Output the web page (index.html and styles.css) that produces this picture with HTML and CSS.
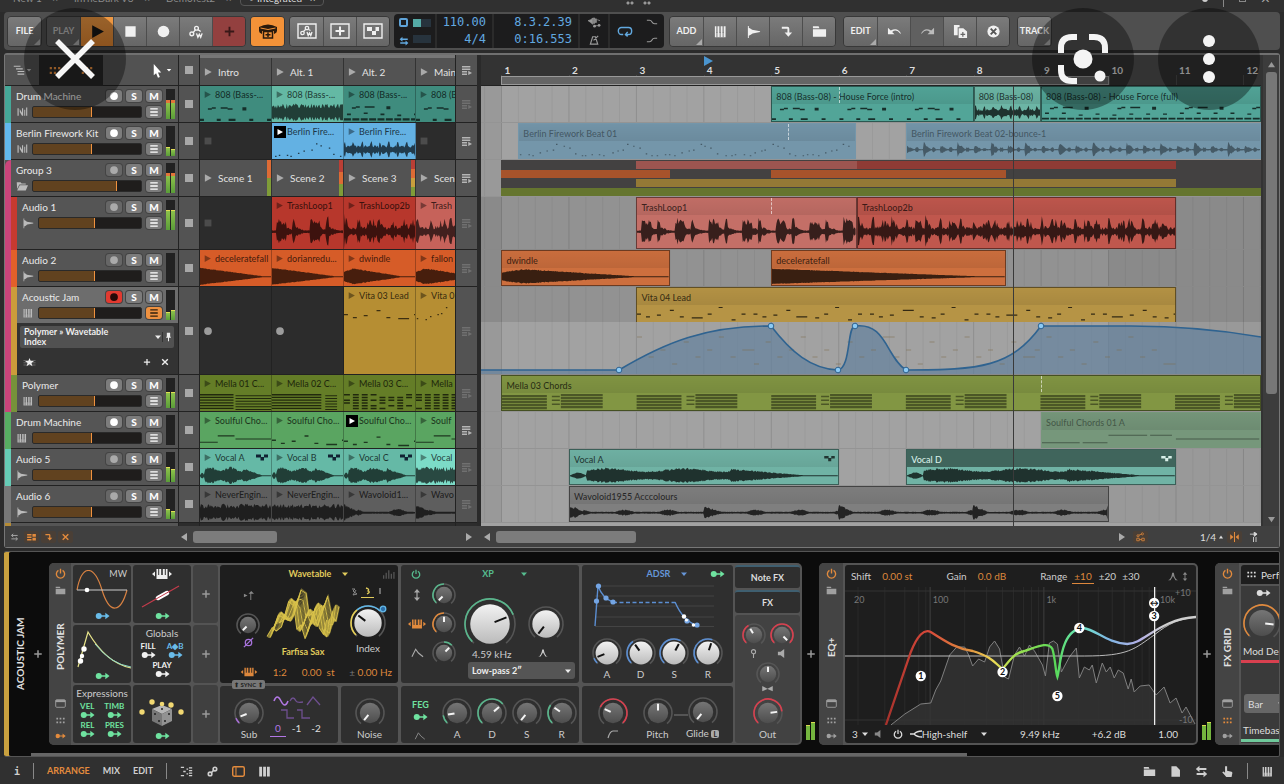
FILE: index.html
```html
<!DOCTYPE html>
<html lang="en">
<head>
<meta charset="utf-8">
<meta name="viewport" content="width=device-width, initial-scale=1">
<title>Integrated</title>
<link rel="stylesheet" href="styles.css">
</head>
<body>
<svg class="sprite" aria-hidden="true">
  <symbol id="play" viewBox="0 0 16 16"><path d="M3 2l11 6-11 6z"/></symbol>
  <symbol id="stop" viewBox="0 0 16 16"><path d="M2.500 2.500h11v11h-11z"/></symbol>
  <symbol id="rec" viewBox="0 0 16 16"><circle cx="8" cy="8" r="6.200"/></symbol>
  <symbol id="auto" viewBox="0 0 16 16"><g fill="none" stroke="currentColor" stroke-width="1.500"><circle cx="3" cy="10.500" r="2"/><circle cx="8" cy="4.500" r="2"/><path d="M4.500 9L7 6M9.500 6l3 2"/></g><path d="M8 10l1.500 4 1.500-3 1.500 3 1.500-4" fill="none" stroke="currentColor" stroke-width="1.500"/></symbol>
  <symbol id="plus" viewBox="0 0 16 16"><path d="M7 3h2v4h4v2H9v4H7V9H3V7h4z"/></symbol>
  <symbol id="cap" viewBox="0 0 20 16"><path d="M1 4q9-5 18 0v4q0 2-3 3V8H4v3Q1 10 1 8z"/><path d="M2.500 5q7.500 3 15 0" fill="none" stroke="#f39238"/><path d="M5.500 8.500h9v6.500h-9zM7.500 11.700h5M10 9.500v4.500" fill="none" stroke="currentColor" stroke-width="1.500"/></symbol>
  <symbol id="boxauto" viewBox="0 0 20 16"><path d="M1 1h18v14H1z" fill="none" stroke="currentColor" stroke-width="1.400"/><g fill="none" stroke="currentColor" stroke-width="1.300"><circle cx="5.500" cy="10" r="1.700"/><circle cx="10" cy="5" r="1.700"/><path d="M6.500 8.500l2.300-2.300M11.500 6.500l2 1M10 9l1.200 3.500 1.300-2.500 1.300 2.500L15 9"/></g></symbol>
  <symbol id="boxplus" viewBox="0 0 20 16"><path d="M1 1h18v14H1z" fill="none" stroke="currentColor" stroke-width="1.400"/><path d="M9 3.500h2V7h3.500v2H11v3.500H9V9H5.500V7H9z"/></symbol>
  <symbol id="boxstep" viewBox="0 0 20 16"><path d="M1 1h18v14H1z" fill="none" stroke="currentColor" stroke-width="1.400"/><path d="M4 4h5v4H4zM9 8h4v4H9zM12.500 4H16v4h-3.500z"/></symbol>
  <symbol id="steps" viewBox="0 0 12 8"><path d="M0 1h5v3H0zM4.500 3.500h3.500V7H4.500zM8 1h4v3H8z"/></symbol>
  <symbol id="piano" viewBox="0 0 16 16"><path d="M2 2.500h1.600v7h1.200v-7h2v7H8.200v-7h2v7h1.200v-7h2V14H2z"/><path d="M4.200 9v5M7.600 9v5M10.800 9v5" stroke="#555" stroke-width=".8"/></symbol>
  <symbol id="drum" viewBox="0 0 16 16"><path d="M2 3h1.600v10H2zM5 4l3 5V3h1.500v10H8l-3-5zM11 5h1.300v8H11zM13.500 2H15v11h-1.500z"/></symbol>
  <symbol id="wave" viewBox="0 0 16 16"><path d="M2 2h1v2l2 1 1.500 1.200L15 7.700v.8L7 10l-2 1.500-2 1V15H2z"/></symbol>
  <symbol id="turn" viewBox="0 0 16 16"><path d="M3 3h6q2 0 2 2v4h3l-4 4.500L6 9h3V5H3z"/></symbol>
  <symbol id="folder" viewBox="0 0 16 16"><path d="M1 2.500h6l1 2H1zM1 5.500h14v8H1z"/></symbol>
  <symbol id="openfolder" viewBox="0 0 16 16"><path d="M1 3h5l1.500 1.500H13V6H4.500L1.500 12zM5 7h11l-3 7H1.500z"/></symbol>
  <symbol id="undo" viewBox="0 0 16 16"><path d="M1 4v7h7L5.500 8.500Q10 5 14 10l1 .5Q11.500 3 4 7z"/></symbol>
  <symbol id="redo" viewBox="0 0 16 16"><path d="M15 4v7H8l2.500-2.500Q6 5 2 10l-1 .5Q4.500 3 12 7z"/></symbol>
  <symbol id="copy" viewBox="0 0 16 16"><path d="M1 1h6v2.500H5V12H1z"/><path d="M6 4.500h5L15 8v7H6z"/><path d="M8 11h5M10.500 8.500v5" stroke="#666" stroke-width="1.300"/></symbol>
  <symbol id="xcircle" viewBox="0 0 16 16"><circle cx="8" cy="8" r="6.500"/><path d="M5 5l6 6M11 5l-6 6" stroke="#555" stroke-width="2"/></symbol>
  <symbol id="cursor" viewBox="0 0 16 16"><path d="M4 1l8 9H8.500l2 5-2 .7-2-4.700L4 13z"/></symbol>
  <symbol id="tree" viewBox="0 0 16 16"><path d="M1 3h9M4 6.500h9M6 10h9M6 13.500h9" fill="none" stroke="currentColor" stroke-width="1.500"/></symbol>
  <symbol id="menu" viewBox="0 0 16 16"><path d="M2 3h12M2 8h12M2 13h12" stroke="currentColor" stroke-width="2.200"/></symbol>
  <symbol id="list" viewBox="0 0 12 12"><path d="M0 2h10M0 5h10M0 8h6M0 11h6" stroke="currentColor" stroke-width="1.800"/><path d="M7.500 7l4.500 2.500-4.500 2.500z"/></symbol>
  <symbol id="caret" viewBox="0 0 8 8"><path d="M1 2.500h6L4 6z"/></symbol>
  <symbol id="up" viewBox="0 0 8 8"><path d="M0 7h8L4 1z"/></symbol>
  <symbol id="down" viewBox="0 0 8 8"><path d="M0 1h8L4 7z"/></symbol>
  <symbol id="left" viewBox="0 0 8 8"><path d="M7 0v8L1 4z"/></symbol>
  <symbol id="right" viewBox="0 0 8 8"><path d="M1 0v8l6-4z"/></symbol>
  <symbol id="star" viewBox="0 0 16 16"><path d="M0 6h16M0 9h16M0 12h16" stroke="#777"/><path d="M8 2.500l1.600 4H14l-3.400 2.700 1.300 4.300L8 11l-3.900 2.500 1.300-4.300L2 6.500h4.400z"/></symbol>
  <symbol id="pin" viewBox="0 0 8 12"><path d="M2 1h4v4l1 2H4.600v4H3.400V7H1l1-2z"/></symbol>
  <symbol id="power" viewBox="0 0 16 16"><path d="M5 3.500a6 6 0 1 0 6 0M8 1v7" fill="none" stroke="currentColor" stroke-width="2"/></symbol>
  <symbol id="window" viewBox="0 0 16 16"><rect x="1" y="2.500" width="14" height="11" rx="1.500" fill="none" stroke="currentColor" stroke-width="1.300"/><path d="M1 3h14v3H1z"/></symbol>
  <symbol id="dots" viewBox="0 0 16 12"><path d="M2 2h2.500v2.500H2zM6.700 2h2.500v2.500H6.700zM11.500 2H14v2.500h-2.500zM2 7.500h2.500V10H2zM6.700 7.500h2.500V10H6.700zM11.500 7.500H14V10h-2.500z"/></symbol>
  <symbol id="mod" viewBox="0 0 16 8"><circle cx="4" cy="4" r="3.200"/><path d="M6 3.200h5V0.500L15.500 4 11 7.500V4.800H6z"/></symbol>
  <symbol id="swap" viewBox="0 0 16 16"><path d="M1 5l4.500-4v2.800H14v2.400H5.500V9zM15 11l-4.500-4v2.800H2v2.400h8.500V15z"/></symbol>
  <symbol id="swapslim" viewBox="0 0 16 16"><path d="M4 5.500h9M6 3L3 5.500 6 8M12 11H3M10 8.500l3 2.500-3 2.500" fill="none" stroke="currentColor" stroke-width="1.500"/></symbol>
  <symbol id="panelrows" viewBox="0 0 16 16"><path d="M1 3h7v2.500H1zM1 7h7v2.500H1zM1 11h7v2.500H1zM9.500 3H15v4.500H9.500zM9.500 9H15v4.500H9.500z"/></symbol>
  <symbol id="cross" viewBox="0 0 16 16"><path d="M3.500 3.500l9 9M12.500 3.500l-9 9" stroke="currentColor" stroke-width="2.200"/></symbol>
  <symbol id="loop" viewBox="0 0 18 12"><path d="M7 10H5a3.500 4 0 0 1 0-8h8a3.500 4 0 0 1 0 8h-3M12 7l-2.500 3 2.500 2" fill="none" stroke="currentColor" stroke-width="1.600"/></symbol>
  <symbol id="metro" viewBox="0 0 12 12"><path d="M4 3h3l2.500 8h-8zM5 7l5-5" fill="none" stroke="currentColor" stroke-width="1.300"/></symbol>
  <symbol id="punch" viewBox="0 0 14 12"><path d="M0 4l3-1 2-2v7L3 6zM6 1h1v6H6zM8 2h1v4H8zM10 3l3 1" stroke="currentColor" stroke-width=".8"/><path d="M7 9.500h6" stroke="currentColor" stroke-width=".8"/><circle cx="7" cy="10" r="1.500"/><circle cx="12" cy="9" r="1.500"/></symbol>
  <symbol id="envup" viewBox="0 0 14 8"><path d="M1 2h3q2 0 3 2t3 2h3" fill="none" stroke="currentColor" stroke-width="1.300"/></symbol>
  <symbol id="envdn" viewBox="0 0 14 8"><path d="M1 6h3q2 0 3-2t3-2h3" fill="none" stroke="currentColor" stroke-width="1.300"/></symbol>
  <symbol id="keysmod" viewBox="0 0 20 12"><path d="M0 6l3-2.500v5zM20 6l-3-2.500v5zM4.500 1h1.700v6h1V1h2v6h1.600V1h2v6h1V1h1.700v10h-11z"/></symbol>
  <symbol id="env" viewBox="0 0 14 10"><path d="M1 9l4-8 3 4 5 4" fill="none" stroke="currentColor" stroke-width="1.200"/></symbol>
  <symbol id="updown" viewBox="0 0 8 12"><path d="M4 0l3 3.500H4.600v5H7L4 12 1 8.500h2.400v-5H1z"/></symbol>
  <symbol id="peak" viewBox="0 0 12 10"><path d="M0 9.500q4-1 5-9h2q1 8 5 9l-3 0-3-5-3 5z"/></symbol>
  <symbol id="speaker" viewBox="0 0 10 10"><path d="M1 3h3l4-3v10L4 7H1z"/></symbol>
  <symbol id="pan" viewBox="0 0 14 8"><path d="M0 0l7 3.500L14 0v7L7 4 0 7z"/></symbol>
  <symbol id="mic" viewBox="0 0 8 10"><circle cx="4" cy="3" r="2.300" fill="none" stroke="currentColor" stroke-width="1.200"/><path d="M3.400 5h1.200v5H3.400z"/></symbol>
  <symbol id="bars" viewBox="0 0 14 10"><path d="M0 6h1.500v4H0zM3 3h1.500v7H3zM6 0h1.500v10H6zM9 4h1.500v6H9zM12 2h1.500v8H12z"/></symbol>
  <symbol id="phase" viewBox="0 0 12 12"><circle cx="6" cy="6" r="3.500" fill="none" stroke="currentColor" stroke-width="1.400"/><path d="M1 11L11 1" stroke="currentColor" stroke-width="1.400"/></symbol>
  <symbol id="hand" viewBox="0 0 16 16"><path d="M5 1.500h2.500V7l5.500 1.200q1 .3 1 1.500l-1 5H6.500L1.500 9 3 8l2 1.500z"/></symbol>
  <symbol id="page" viewBox="0 0 16 16"><path d="M3 1.500h6L13.500 6v8.500H3z"/></symbol>
  <symbol id="mixer" viewBox="0 0 16 16"><path d="M1.500 2h3.500v12H1.500zM6.300 2h3.500v12H6.300zM11 2h3.500v12H11z"/></symbol>
  <symbol id="pane" viewBox="0 0 18 16"><rect x="1" y="1.500" width="16" height="13" rx="2" fill="none" stroke="currentColor" stroke-width="2"/><path d="M5.500 2v12" stroke="currentColor" stroke-width="1.500"/></symbol>
  <symbol id="nodes" viewBox="0 0 16 16"><g fill="none" stroke="currentColor" stroke-width="2"><circle cx="5" cy="11" r="2.200"/><circle cx="11" cy="5" r="2.200"/><path d="M6.500 9.500l3-3"/></g></symbol>
  <symbol id="routes" viewBox="0 0 16 14"><path d="M1 2h4M1 12h4M4 7h3M8 4h2M8 10h2M11 2.500h4M11 6h4M11 9h4M11 12h4" stroke="currentColor" stroke-width="1.600"/></symbol>
  <symbol id="snap" viewBox="0 0 14 14"><path d="M7 0v14" stroke="currentColor" stroke-width="1.400"/><path d="M1 3l4.500 4L1 11zM13 3L8.500 7l4.500 4z"/></symbol>
  <symbol id="follow" viewBox="0 0 14 14"><path d="M2 3h9M8 0l4 3-4 3zM7 7v7M10.500 7v7" stroke="currentColor" stroke-width="1.200"/></symbol>
  <symbol id="autoclip" viewBox="0 0 16 16"><g fill="none" stroke="currentColor" stroke-width="1.200"><circle cx="4" cy="6" r="1.700"/><circle cx="11" cy="3" r="1.700"/><path d="M5.500 5L9.500 3.500M2 10h4v4H2zM6 12h4M10 10h4v4h-4z"/></g></symbol>
</svg>

<div class="app">
  <nav class="tabs" aria-label="Projects">
    <a href="#">New 1 <b>×</b></a><a href="#">InTheDark V3 <b>×</b></a><a href="#">DemoTest2 <b>×</b></a><a href="#" class="current">• Integrated <b>×</b></a>
    <span class="grip"></span><span class="wm"><i></i><em></em><u></u><b>×</b></span>
  </nav>

  <header class="toolbar">
    <div class="group"><button class="word corner">FILE</button></div>
    <div class="group">
      <button class="word corner dim">PLAY</button>
      <button class="on" data-icon="play" aria-label="Play"></button>
      <button data-icon="stop" aria-label="Stop"></button>
      <button data-icon="rec" aria-label="Record"></button>
      <button data-icon="auto" aria-label="Automation write"></button>
      <button class="red" data-icon="plus" aria-label="Overdub"></button>
    </div>
    <div class="group"><button class="bright" data-icon="cap" aria-label="Launcher overdub"></button></div>
    <div class="group">
      <button class="wide" data-icon="boxauto" aria-label="Clip automation"></button>
      <button class="wide" data-icon="boxplus" aria-label="Clip add"></button>
      <button class="wide" data-icon="boxstep" aria-label="Clip steps"></button>
    </div>
    <div class="lcd">
      <div class="lcd-io">
        <span class="sq"></span><span class="bar lit"></span>
        <svg><use href="#swap"/></svg><span class="bar two"></span>
      </div>
      <div class="lcd-num"><span>110.00</span><span>4/4</span></div>
      <div class="lcd-num long"><span>8.3.2.39</span><span>0:16.553</span></div>
      <div class="lcd-ic"><svg><use href="#punch"/></svg><svg><use href="#metro"/></svg></div>
      <div class="lcd-loop"><svg><use href="#loop"/></svg><div><svg><use href="#envup"/></svg><svg><use href="#envdn"/></svg></div></div>
    </div>
    <div class="group">
      <button class="word corner">ADD</button>
      <button data-icon="piano" aria-label="Add instrument track"></button>
      <button data-icon="wave" aria-label="Add audio track"></button>
      <button data-icon="turn" aria-label="Add effect track"></button>
      <button data-icon="folder" aria-label="Add group"></button>
    </div>
    <div class="group apart">
      <button class="word corner">EDIT</button>
      <button data-icon="undo" aria-label="Undo"></button>
      <button class="dim" data-icon="redo" aria-label="Redo"></button>
      <button data-icon="copy" aria-label="Duplicate"></button>
      <button data-icon="xcircle" aria-label="Delete"></button>
    </div>
    <div class="group apart"><button class="word corner">TRACK</button></div>
  </header>

  <main class="arranger">
    <section class="heads">
      <div class="tools">
        <button class="tool" aria-label="Track options"><svg><use href="#tree"/></svg><svg class="car"><use href="#caret"/></svg></button>
        <span class="view-toggle"><svg><use href="#dots"/></svg><svg><use href="#dots"/></svg></span>
        <button class="tool pointer" aria-label="Pointer tool"><svg><use href="#cursor"/></svg><svg class="car"><use href="#caret"/></svg></button>
      </div>
      <div class="rows" id="heads"></div>
    </section>
    <section class="stops"><div class="tools"><i class="sq"></i></div><div class="rows" id="stops"></div></section>
    <section class="launcher"><div class="tools" id="scenes"></div><div class="rows" id="cells"></div></section>
    <section class="lists"><div class="tools"><svg><use href="#list"/></svg></div><div class="rows" id="lists"></div></section>
    <div class="splitter"></div>
    <section class="timeline">
      <div class="tools ruler" id="ruler"></div>
      <div class="rows" id="lanes"></div>
    </section>
    <div class="vscroll"><svg><use href="#up"/></svg><span></span><svg><use href="#down"/></svg></div>
    <div class="foot foot-left">
      <svg><use href="#swapslim"/></svg>
      <svg class="or"><use href="#panelrows"/></svg><svg class="or"><use href="#turn"/></svg><svg class="or"><use href="#cross"/></svg>
    </div>
    <div class="foot foot-launch"><svg><use href="#left"/></svg><span class="thumb short"></span><svg class="end"><use href="#right"/></svg></div>
    <div class="foot foot-time"><svg><use href="#left"/></svg><span class="thumb"></span><svg class="end"><use href="#right"/></svg>
      <svg class="or"><use href="#autoclip"/></svg><span class="quant">1/4 <svg><use href="#up"/></svg></span><svg class="or"><use href="#snap"/></svg><svg class="wht"><use href="#follow"/></svg></div>
  </main>

  <section class="chain">
    <div class="chain-in">
      <h2 class="vert track-name">ACOUSTIC JAM</h2>
      <button class="add" aria-label="Add device"><svg><use href="#plus"/></svg></button>
      <article class="device">
        <div class="side"><svg class="or"><use href="#power"/></svg><svg><use href="#folder"/></svg><h3 class="vert">POLYMER</h3><svg><use href="#window"/></svg><svg><use href="#dots"/></svg><svg class="or flat"><use href="#mod"/></svg></div>
        <div class="mods">
          <div class="cell"><span class="tr">MW</span>
            <svg class="draw" viewBox="0 0 58 42"><path d="M4 20C9-6 21-6 29 20s19 22 25 0" fill="none" stroke="#d98242" stroke-width="1.200"/><path d="M4 20h50" stroke="#ccc"/><circle cx="14" cy="20" r="2.300" fill="#fff"/></svg>
            <svg class="m blue"><use href="#mod"/></svg></div>
          <div class="cell"><span class="keys"><svg><use href="#keysmod"/></svg></span>
            <svg class="draw" viewBox="0 0 58 42"><path d="M9 37L46 16" stroke="#c33b4b" stroke-width="1.200"/><path d="M25 28l9-5" stroke="#fff" stroke-width="4.500" stroke-linecap="round"/><path d="M22 29.600l15-8.500" stroke="#c33b4b"/></svg>
            <svg class="m green"><use href="#mod"/></svg></div>
          <div class="cell plus"><svg><use href="#plus"/></svg></div>
          <div class="cell">
            <svg class="draw" viewBox="0 0 58 42"><path d="M5 37L15 2q18 31 43 36" fill="none" stroke="#e8e58b" stroke-width="1.200"/><path d="M22 14q16 20 36 23" fill="none" stroke="#8fd8c8"/><g fill="#fff"><circle cx="11" cy="19" r="2.700"/><circle cx="9" cy="26" r="2.200"/><circle cx="7.500" cy="31" r="2.700"/></g></svg>
            <svg class="m green"><use href="#mod"/></svg></div>
          <div class="cell labels"><strong>Globals</strong><div class="pair"><span class="white">FILL<svg class="m"><use href="#mod"/></svg></span><span class="blue">A◆B<svg class="m"><use href="#mod"/></svg></span></div><div class="pair one"><span class="white">PLAY<svg class="m"><use href="#mod"/></svg></span></div></div>
          <div class="cell plus"><svg><use href="#plus"/></svg></div>
          <div class="cell labels"><strong>Expressions</strong><div class="pair green"><span>VEL<svg class="m"><use href="#mod"/></svg></span><span>TIMB<svg class="m"><use href="#mod"/></svg></span></div><div class="pair green"><span>REL<svg class="m"><use href="#mod"/></svg></span><span>PRES<svg class="m"><use href="#mod"/></svg></span></div></div>
          <div class="cell">
            <svg class="draw" viewBox="0 0 58 42"><path d="M19 19l10-4 10 4-10 5z" fill="#b5b5b5"/><path d="M19 19l10 5v12l-10-5z" fill="#777"/><path d="M39 19l-10 5v12l10-5z" fill="#929292"/><g fill="#222"><circle cx="29" cy="19" r="1"/><circle cx="22" cy="24" r="1"/><circle cx="26" cy="31" r="1"/><circle cx="32" cy="31" r="1"/><circle cx="36" cy="24" r="1"/></g><g fill="#f1d872"><circle cx="9" cy="22" r="2.700"/><circle cx="19" cy="12" r="2.700"/><circle cx="29" cy="14" r="2.300"/><circle cx="38" cy="15" r="2.700"/><circle cx="48" cy="22" r="2.700"/></g></svg>
            <svg class="m green"><use href="#mod"/></svg></div>
          <div class="cell plus"><svg><use href="#plus"/></svg></div>
        </div>
        <div class="synth">
          <div class="pane wavetable">
            <div class="ptitle yellow"><span>Wavetable</span><svg class="car"><use href="#caret"/></svg><svg class="bars"><use href="#bars"/></svg></div>
            <div class="wt-body">
              <div class="col left"><svg class="ic" viewBox="0 0 12 12"><path d="M1 4l4 2-4 2zM8 11V4H6l3-3 3 3H9v7z" fill="#888"/></svg><i class="knob" data-size="24" data-angle="-135"></i><svg class="ic purple"><use href="#phase"/></svg></div>
              <div class="col"><svg class="table" id="wavetable" viewBox="0 0 72 50"></svg><small class="yellow">Farfisa Sax</small></div>
              <div class="col right"><svg class="minis" viewBox="0 0 40 12" fill="none"><path d="M4 3h3l-2 2 4 3-4 1 3-5" stroke="#888" fill="none"/><path d="M18 2q4 1 2 3 3 1-1 3" stroke="#e0cb5c" stroke-width="1.300" fill="none"/><path d="M32 2v6" stroke="#888" stroke-width="1.500"/><path d="M13 11.500h13" stroke="#e0cb5c"/></svg><i class="knob" data-size="36" data-light="1" data-angle="-52" data-color="#e6cf55" data-from="-135" data-to="-40" data-color2="#62b8e8" data-to2="45"></i><span>Index</span></div>
            </div>
            <div class="wt-foot"><svg><use href="#keysmod"/></svg><span>1:2</span><span>0.00 &nbsp;st</span><span><i>±</i> 0.00 Hz</span></div>
            <span class="sync">⬆ SYNC ⬆</span>
          </div>
          <div class="pane sub">
            <div class="kcol"><i class="knob" data-size="30" data-angle="-112" data-color="#a86fd8" data-from="-135" data-to="-112"></i><span>Sub</span></div>
            <div class="shapes"><svg viewBox="0 0 50 24"><g fill="none" stroke="#6e4f8f" stroke-width="1.300"><path d="M1 5q3-8 7 0t7 0" stroke="#b277e4" stroke-width="1.600"/><path d="M17 5q3-6 6 0 1 2 7 1M34 9l6-8 7 8M8 14h6v8h7M24 14h5v8h8"/></g></svg><div class="octs"><b>0</b><span>-1</span><span>-2</span></div></div>
          </div>
          <div class="pane noise"><div class="kcol"><i class="knob" data-size="30" data-angle="-140"></i><span>Noise</span></div></div>
          <div class="pane xp">
            <div class="ptitle mint"><svg class="pw"><use href="#power"/></svg><span>XP</span><svg class="car"><use href="#caret"/></svg></div>
            <div class="xp-left">
              <svg><use href="#updown"/></svg><i class="knob" data-size="24" data-angle="-135" data-color="#59b68c" data-from="-135" data-to="0"></i>
              <svg class="or"><use href="#keysmod"/></svg><i class="knob" data-size="24" data-angle="0" data-color="#e0893c" data-from="-135" data-to="0"></i>
              <svg class="env"><use href="#env"/></svg><i class="knob" data-size="24" data-angle="45" data-color="#59b68c" data-from="0" data-to="45"></i>
            </div>
            <div class="xp-main">
              <div class="big"><i class="knob" data-size="52" data-light="1" data-angle="68" data-color="#59b68c" data-from="-135" data-to="68"></i><i class="knob" data-size="36" data-light="1" data-angle="-142"></i></div>
              <div class="biglab"><span>4.59 kHz</span><svg><use href="#peak"/></svg></div>
              <label class="pick"><select aria-label="Filter mode"><option>Low-pass 2″</option></select><svg class="car"><use href="#caret"/></svg></label>
            </div>
          </div>
          <div class="pane feg">
            <div class="feglab green"><b>FEG</b><svg class="m"><use href="#mod"/></svg><svg class="gray"><use href="#env"/></svg></div>
            <div class="kcol"><i class="knob" data-size="30" data-angle="-100" data-color="#59b68c" data-from="-135" data-to="-100"></i><span>A</span></div>
            <div class="kcol"><i class="knob" data-size="30" data-angle="50" data-color="#59b68c" data-from="-135" data-to="50"></i><span>D</span></div>
            <div class="kcol"><i class="knob" data-size="30" data-angle="-140"></i><span>S</span></div>
            <div class="kcol"><i class="knob" data-size="30" data-angle="-55" data-color="#59b68c" data-from="-135" data-to="-55"></i><span>R</span></div>
          </div>
          <div class="pane adsr">
            <div class="ptitle sky"><span>ADSR</span><svg class="car"><use href="#caret"/></svg><svg class="m green"><use href="#mod"/></svg></div>
            <svg class="adsr-graph" viewBox="0 0 128 46"><path d="M5 4h119M5 14h119M5 24h119M5 35h119M5 44.500h119" stroke="#444"/><g fill="none" stroke="#5b8ed2" stroke-width="1.400"><path d="M5 44L8 4q5 13 15 16M85 20q8 19 23 24"/><path d="M23 20.500h62" stroke-dasharray="4 2.500"/></g><g fill="#74a5e4"><circle cx="6.500" cy="19" r="2.600"/><circle cx="8.500" cy="4" r="2.600"/><circle cx="16" cy="16" r="2.600"/><circle cx="23" cy="20" r="2.600"/><circle cx="97" cy="39" r="2.600"/><circle cx="107" cy="43" r="2.600"/></g><g fill="#fff"><circle cx="94" cy="34.500" r="2.200"/><circle cx="96.500" cy="38" r="1.600"/><circle cx="103.500" cy="43" r="1.800"/></g></svg>
            <div class="four">
              <div class="kcol"><i class="knob" data-size="30" data-light="1" data-angle="-112" data-color="#5b8ed2" data-from="-135" data-to="-112"></i><span>A</span></div>
              <div class="kcol"><i class="knob" data-size="30" data-light="1" data-angle="-35" data-color="#5b8ed2" data-from="-135" data-to="-35"></i><span>D</span></div>
              <div class="kcol"><i class="knob" data-size="30" data-light="1" data-angle="28" data-color="#5b8ed2" data-from="-135" data-to="28"></i><span>S</span></div>
              <div class="kcol"><i class="knob" data-size="30" data-light="1" data-angle="18" data-color="#5b8ed2" data-from="-135" data-to="18"></i><span>R</span></div>
            </div>
          </div>
          <div class="pane glide">
            <div class="kcol"><i class="knob" data-size="30" data-angle="-65" data-color="#d8404f" data-from="-65" data-to="135"></i><svg class="curve" viewBox="0 0 12 12"><path d="M1 10Q3 3 6 3h5" fill="none" stroke="#aaa" stroke-width="1.200"/></svg></div>
            <div class="kcol"><i class="knob" data-size="30" data-angle="0"></i><span>Pitch</span></div>
            <div class="kcol linked"><i class="knob" data-size="30" data-angle="-140"></i><span>Glide <b>L</b></span></div>
          </div>
        </div>
        <div class="outs">
          <button class="slot">Note FX</button><button class="slot">FX</button>
          <div class="out">
            <div class="two"><i class="knob" data-size="24" data-angle="-30" data-color="#d8404f" data-from="-135" data-to="-30"></i><i class="knob" data-size="24" data-angle="135" data-color="#d8404f" data-from="-135" data-to="135"></i><svg><use href="#mic"/></svg><svg><use href="#speaker"/></svg></div>
            <i class="knob" data-size="24" data-angle="0"></i><svg class="pan"><use href="#pan"/></svg>
            <div class="kcol"><i class="knob" data-size="30" data-angle="83" data-color="#d8404f" data-from="-135" data-to="83"></i><span>Out</span></div>
          </div>
        </div>
      </article>
      <div class="between"><svg><use href="#plus"/></svg><span class="mm"><i></i><i></i></span></div>
      <article class="device eq">
        <div class="side"><svg class="or"><use href="#power"/></svg><svg><use href="#folder"/></svg><h3 class="vert">EQ+</h3><svg><use href="#window"/></svg><svg><use href="#dots"/></svg><svg class="flat"><use href="#mod"/></svg></div>
        <div class="eq-main">
          <div class="eq-top"><span>Shift</span><b>0.00 st</b><span>Gain</span><b>0.0 dB</b><span>Range</span><b class="act">±10</b><span class="r">±20</span><span class="r">±30</span><svg><use href="#peak"/></svg><svg class="ud"><use href="#updown"/></svg></div>
          <svg class="eq-graph" viewBox="0 0 352 138" preserveAspectRatio="none" id="eq"></svg>
          <div class="eq-bot"><span>3</span><svg class="car"><use href="#caret"/></svg><svg class="spk"><use href="#speaker"/></svg><svg class="pw"><use href="#power"/></svg><label class="type"><svg viewBox="0 0 12 8"><path d="M0 4h4q3-3 8-3M4 4q3 3 8 3" fill="none" stroke="#ddd" stroke-width="1.300"/></svg><select aria-label="Band type"><option>High-shelf</option></select><svg class="car"><use href="#caret"/></svg></label><span class="v">9.49 kHz</span><span class="v">+6.2 dB</span><span class="v">1.00</span></div>
        </div>
      </article>
      <div class="between"><svg><use href="#plus"/></svg><span class="mm"><i></i><i></i></span></div>
      <article class="device grid-dev">
        <div class="side"><svg class="or"><use href="#power"/></svg><svg><use href="#folder"/></svg><h3 class="vert">FX GRID</h3><svg><use href="#window"/></svg><svg class="or"><use href="#dots"/></svg><svg class="flat"><use href="#mod"/></svg></div>
        <div class="fx">
          <div class="fx-title"><svg><use href="#dots"/></svg>Perform</div>
          <div class="fx-main"><svg class="m"><use href="#mod"/></svg><i class="knob" data-size="38" data-angle="97" data-color="#e0893c" data-from="-135" data-to="97"></i><span class="under redline">Mod Depth</span><button>Bar <svg class="car"><use href="#caret"/></svg></button><span class="under mintline">Timebase</span></div>
        </div>
      </article>
    </div>
    <div class="chain-scroll"><span></span></div>
  </section>

  <footer class="status">
    <b class="info">i</b><hr>
    <a href="#" class="sel">ARRANGE</a><a href="#">MIX</a><a href="#">EDIT</a><hr>
    <svg><use href="#routes"/></svg><svg><use href="#nodes"/></svg><svg class="or"><use href="#pane"/></svg><svg><use href="#mixer"/></svg>
    <span class="grow"></span>
    <svg><use href="#folder"/></svg><svg><use href="#page"/></svg><svg><use href="#swap"/></svg><svg><use href="#hand"/></svg><hr><svg class="last"><use href="#piano"/></svg>
  </footer>
</div>

<button class="fab close" aria-label="Close"><svg viewBox="0 0 102 102"><path d="M33 33l36 36M69 33L33 69" stroke="#f6f6f6" stroke-width="5.500"/></svg></button>
<button class="fab lens" aria-label="Lens"><svg viewBox="0 0 102 102"><g fill="none" stroke="#f4f4f4" stroke-width="6"><path d="M29 45v-5q0-11 11-11h5M57 29h5q11 0 11 11v5M29 57v5q0 11 11 11h5"/></g><circle cx="51" cy="51" r="9.500" fill="#f4f4f4"/><circle cx="68" cy="68" r="5.500" fill="#f4f4f4"/></svg></button>
<button class="fab more" aria-label="More"><svg viewBox="0 0 102 102"><g fill="#f4f4f4"><circle cx="51" cy="33" r="6"/><circle cx="51" cy="51" r="6"/><circle cx="51" cy="69" r="6"/></g></svg></button>
<script src="app.js"></script>
</body>
</html>
```
FILE: styles.css
```css
* { box-sizing: border-box; }
body { margin: 0; background: #2b2b2b; color: #dedede; font: 10px/14px Lato, "Open Sans", sans-serif; overflow-x: hidden; }
svg { display: block; fill: currentColor; flex: none; }
button, select, input { font: inherit; color: inherit; border: 0; padding: 0; margin: 0; background: none; }
button { display: flex; align-items: center; justify-content: center; cursor: pointer; }
h2, h3 { margin: 0; font-size: 12px; font-weight: 400; }
i, em { font-style: normal; }
a { color: inherit; text-decoration: none; }
.sprite { position: absolute; width: 0; height: 0; }
.app { display: flex; flex-direction: column; min-height: 100vh; }
.or { color: #e38b3d; }
.green { color: #6fe3a0; }
.blue { color: #69bcea; }
.white { color: #f2f2f2; }
.yellow { color: #e0cb5c; }
.mint { color: #56bd8f; }
.sky { color: #6696d8; }
.purple { color: #a873dc; }
.gray { color: #888; }
.car { width: 8px; height: 8px; }

/* project tabs */
.tabs { height: 12px; display: flex; align-items: flex-start; padding-left: 5px; overflow: hidden; color: #8c8c8c; background: #303030; }
.tabs a { margin-top: -10px; height: 16px; line-height: 16px; padding: 0 8px; white-space: nowrap; }
.tabs a b { font-weight: 400; margin: 0 0 0 8px; }
.tabs .current { border: 1px solid #555; border-radius: 4px; color: #ddd; line-height: 14px; }
.tabs .current b { margin-left: 5px; }
.grip { display: flex; gap: 9px; margin: 1px 0 0 302px; height: 4px; }
.grip::before, .grip::after { content: ""; width: 8px; height: 4px; background: radial-gradient(circle, #999 1px, transparent 2px) 0 0 / 4px 4px; }
.wm { margin-left: auto; margin-top: -9px; display: flex; gap: 15px; padding-right: 14px; font-size: 16px; color: #aaa; }
.wm i { width: 6px; height: 6px; margin-top: 5px; border-radius: 3px; background: #ccc; }
.wm em { width: 1px; height: 16px; background: #888; }
.wm u { width: 7px; height: 7px; margin-top: 4px; border: 1px solid #888; }
.wm b { font-weight: 400; }

/* transport bar */
.toolbar { height: 38px; margin: 0 4px; padding: 0 3px; display: flex; align-items: center; gap: 4px; background: #4f4f4f; border-radius: 4px; }
.group { display: flex; height: 31px; border: 1px solid #383838; border-radius: 4px; overflow: hidden; flex: none; }
.group.apart { margin-left: 3px; }
.group button { position: relative; width: 33px; color: #f0f0f0; background: linear-gradient(#7b7b7b, #666); }
.group button + button { border-left: 1px solid #4d4d4d; }
.group button svg { width: 15px; height: 15px; }
.group button.wide svg { width: 20px; height: 16px; }
.group .word { font-weight: 700; font-size: 9px; }
.group .corner::after { content: ""; position: absolute; right: 1px; bottom: 1px; border: 3px solid #aaa; border-top-color: transparent; border-left-color: transparent; }
.group .on { background: linear-gradient(#f09a44, #dc8330); color: #161616; }
.group .on svg { width: 17px; height: 17px; }
.group .bright { background: #f39238; color: #2a1a0c; }
.group .bright svg { width: 20px; height: 16px; }
.group .red { background: #93403f; color: #391818; }
.group .dim { color: #bbb; background: #606060; }
.lcd { display: flex; height: 34px; width: 270px; margin-right: 1px; background: #1c1c1d; border-radius: 4px; color: #62a9e0; font: 12px/17px "DejaVu Sans Mono", "Liberation Mono", monospace; }
.lcd > * { border-right: 2px solid #2b2b2b; }
.lcd > :last-child { border: 0; }
.lcd-io { width: 43px; padding: 4px 5px; display: grid; grid-template-columns: 10px 18px; gap: 8px 4px; align-items: center; }
.lcd-io .sq { width: 9px; height: 9px; border: 2px solid #5fa3d8; border-radius: 2px; }
.lcd-io svg { width: 10px; height: 10px; }
.lcd-io .bar { height: 8px; background: #27333d; }
.lcd-io .lit { background: linear-gradient(90deg, #55aaa5 8px, #27333d 8px); }
.lcd-num { width: 57px; display: flex; flex-direction: column; align-items: flex-end; padding-right: 6px; }
.lcd-num.long { width: 86px; }
.lcd-ic { width: 30px; display: flex; flex-direction: column; align-items: center; justify-content: space-around; color: #999; }
.lcd-ic svg { width: 13px; height: 11px; }
.lcd-loop { flex: 1; display: flex; align-items: center; justify-content: space-around; }
.lcd-loop svg { width: 16px; height: 12px; }
.lcd-loop div { color: #999; display: flex; flex-direction: column; gap: 10px; }
.lcd-loop div svg { width: 12px; height: 8px; }

/* arranger */
.arranger { margin: 3px 4px 0; border: 1px solid #777; border-radius: 3px; border-top: 2px solid #707070; background: #404040; display: grid; grid-template-columns: 173px 21px 256px 22px 4px minmax(0, 1fr) 18px; grid-template-rows: auto 21px; }
.tools { height: 31px; display: flex; align-items: center; border-bottom: 1px solid #222; background: #525252; }
.rows { height: 440px; overflow: hidden; background: #2c2c2c; }
.row { height: 37px; border-bottom: 1px solid #222; }
.row.tall { height: 53px; }
.row.xtall { height: 88px; }
.tool { width: 34px; height: 31px; gap: 1px; color: #bbb; }
.tool svg { width: 12px; height: 12px; }
.tool .car { width: 6px; height: 6px; }
.tool.pointer { color: #fff; margin-left: auto; }
.tool.pointer svg:first-child { width: 15px; height: 15px; }
.view-toggle { width: 64px; height: 31px; display: flex; align-items: center; justify-content: space-around; background: #272727; color: #e38b3d; }
.view-toggle svg { width: 14px; height: 11px; }
.heads, .stops, .lists { min-width: 0; }
.heads .row { display: flex; background: #555; }
.strip { width: 6px; flex: none; margin-bottom: -1px; background: var(--c); }
.nest { background: #c9447a; }
.first-nest { border-radius: 6px 0 0 0; }
.head-body { flex: 1; min-width: 0; }
.track { display: grid; grid-template-columns: minmax(0, 1fr) 12px; height: 36px; }
.xtall .track { background: #6d6d6d; }
.ctl { padding: 4px 4px 0 5px; display: flex; flex-direction: column; gap: 4px; min-width: 0; }
.ctl > div { display: flex; align-items: center; gap: 4px; height: 12px; }
.ctl .nm { flex: 1; white-space: nowrap; color: #eaeaea; line-height: 12px; }
.ctl button { flex: none; width: 16px; height: 12px; border-radius: 3px; background: #7c7c7c; color: #fff; font-weight: 900; font-size: 10px; line-height: 12px; box-shadow: 0 0 0 1px #444; }
.ctl button svg { width: 10px; height: 10px; }
.ctl .off { background: #666; color: #aaa; }
.ctl .hot { background: #e23a30; color: #260a08; }
.ctl .menu-on { background: #ee9140; color: #33200c; }
.ctl .ti { width: 12px; height: 12px; color: #bbb; }
.ctl input { appearance: none; flex: 1; min-width: 0; height: 12px; border: 1px solid #2a2a2a; border-radius: 2px; background: linear-gradient(90deg, #61421f var(--v), #1f1d1c var(--v)); }
.ctl input::-webkit-slider-thumb { appearance: none; width: 1px; height: 10px; background: #f0923f; }
.meter { margin: 3px 0; width: 9px; display: flex; gap: 1px; align-items: flex-end; background: #222; }
.meter i { flex: 1; height: var(--h); background: linear-gradient(#8dc14a, #5a9d39); border-top: 1px solid #e2dc55; }
.meter .hot-m { border-top: 3px solid #e2753a; }
.auto-panel { height: 51px; padding: 3px 4px 3px 3px; background: #333; }
.lane-pick { width: 100%; height: 22px; background: #515151; border-radius: 2px; padding-left: 4px; text-align: left; font-size: 9px; line-height: 10px; color: #eee; font-weight: 700; }
.lane-pick span { flex: 1; }
.lane-pick svg { width: 8px; height: 8px; }
.lane-pick .pin { width: 12px; height: 10px; border-left: 1px solid #333; }
.auto-btns { display: flex; align-items: center; gap: 8px; padding: 8px 4px 0 2px; color: #eee; }
.auto-btns svg { width: 10px; height: 10px; }
.auto-btns svg:first-child { width: 15px; height: 12px; margin-right: auto; }
.stops, .lists { border-left: 1px solid #222; }
.stops .tools, .stops .row, .lists .tools, .lists .row { display: flex; align-items: center; justify-content: center; background: #535353; }
i.sq { width: 8px; height: 8px; background: #a8a8a8; }
.lists svg { width: 10px; height: 10px; color: #b5b5b5; }
.lists .row svg { color: #707070; }
.lists .row.lit svg { color: #b5b5b5; }
.launcher { overflow: hidden; border-left: 1px solid #222; min-width: 0; }
.launcher .row, #scenes { display: grid; grid-template-columns: repeat(4, 72px); }
#scenes { border-top: 3px solid #777; }
.scene { height: 100%; display: flex; align-items: center; padding-left: 3px; gap: 5px; border-right: 1px solid #333; background: #535353; color: #e2e2e2; position: relative; white-space: nowrap; }
.scene svg { width: 10px; height: 10px; color: #aaa; }
.scene .mix { position: absolute; right: 0; top: 0; bottom: 0; width: 4px; }
.slotcell { display: flex; align-items: center; padding-left: 3px; border-right: 1px solid #222; color: #4c4c4c; }
.slotcell svg { width: 10px; height: 10px; }
.slotcell.r { color: #9c9c9c; }
.clip { display: flex; flex-direction: column; overflow: hidden; border-right: 1px solid #0004; background: var(--c); min-width: 0; }
.clip-top { display: flex; align-items: center; gap: 3px; height: 17px; padding-left: 3px; white-space: nowrap; color: #0006; flex: none; font-size: 9px; font-weight: 500; }
.clip-top > svg { width: 9px; height: 9px; }
.clip-top span { color: #000000b0; }
.clip-top .playing { width: 12px; height: 12px; background: #000; color: #fff; padding: 2px; margin-left: -1px; margin-right: -2px; }
.clip-top .st { margin-left: auto; margin-right: 3px; width: 12px; color: #123; }
.art { flex: 1; min-height: 0; width: 100%; }
.clip .art { color: #000a; }
.clip.padded .art { flex: none; height: 18px; }

/* timeline */
.timeline { min-width: 0; position: relative; overflow: hidden; }
.ruler { position: relative; background: #333; overflow: hidden; color: #ddd; }
.ruler span { position: absolute; top: 8px; padding-left: 3px; line-height: 14px; font-weight: 700; }
.ruler span::before { content: ""; position: absolute; left: 0; top: 12px; height: 12px; border-left: 1px solid #4a4a4a; }
.ruler .loop { position: absolute; top: 21px; height: 9px; background: #656565; border: 1px solid #999; }
.ruler .mark { position: absolute; top: 1px; width: 9px; height: 10px; color: #4a95d0; }
.lane { position: relative; background: #a2a2a2; border-bottom: 1px solid #949494; }
.lane.shade { background: #929292; border-color: #898989; }
.grid { position: absolute; inset: 0; width: 100%; height: 100%; }
.tclip { position: absolute; top: 0; height: 36px; overflow: hidden; display: flex; flex-direction: column; background: var(--c); border: 1px solid #0007; color: #000000b0; }
.tall .tclip { height: 52px; }
.tclip b { height: 17px; flex: none; line-height: 20px; padding-left: 4px; font-weight: 500; font-size: 9px; white-space: nowrap; background: linear-gradient(#00000005, #00000014); }
.tclip .st { position: absolute; right: 3px; top: 5px; width: 11px; height: 7px; }
.tclip.sel b { background: #40655c; color: #d8efe8; }
.tclip.sel .st { color: #d8efe8; }
.tclip.mute { border-color: transparent; color: #0006; }
.tclip .art { color: #000000b8; }
.tclip .art.soft { color: #0000006b; }
.tclip.mute .art { color: #0006; }
.gbar { position: absolute; height: 8px; background: var(--c); }
.gback { position: absolute; top: 0; bottom: 0; right: 0; background: #434141; }
.autolane { position: absolute; left: 0; right: 0; bottom: 0; height: 52px; background: #a2a2a2; }
.autolane svg { position: absolute; inset: 0; width: 100%; height: 100%; }
.loopline { position: absolute; top: 1px; height: 16px; border-left: 1px dashed #fff9; }
.playhead { position: absolute; top: 31px; bottom: 0; width: 1px; background: #3a3a3a; }
.splitter { background: #2a2a2a; }
.vscroll { border-left: 2px solid #333; display: flex; flex-direction: column; align-items: center; padding: 6px 0 3px; gap: 4px; color: #999; background: #3c3c3c; }
.vscroll svg { width: 7px; height: 7px; }
.vscroll span { width: 11px; height: 322px; border-radius: 3px; background: #777; margin-bottom: auto; }
.foot { display: flex; align-items: center; gap: 2px; background: #404040; min-width: 0; }
.foot > svg { width: 15px; height: 12px; color: #aaa; padding: 1px; }
.foot > svg.or { color: #e38b3d; background: #4a3f36; border-radius: 2px; }
.foot > svg.wht { color: #ddd; }
.foot-left { padding-left: 2px; color: #ddd; }
.foot-launch { grid-column: 2 / 5; }
.foot-time { grid-column: 5 / 8; padding: 0 18px 0 5px; }
.foot-launch > svg, .foot-time > svg:first-child, .foot .end { width: 10px; height: 10px; }
.foot-launch > svg:first-child { margin-left: 1px; }
.foot .end { margin-left: auto; }
.foot-launch .end { margin-right: 3px; }
.foot-time { gap: 4px; }
.foot-time .end { margin-right: 2px; }
.thumb { width: 140px; height: 12px; border-radius: 3px; background: #7c7c7c; }
.thumb.short { width: 84px; margin-left: 2px; }
.quant { display: flex; align-items: center; gap: 3px; margin-left: 48px; }
.quant svg { width: 4px; height: 4px; }

/* device chain */
.chain { margin: 3px 4px 0; border: 1px solid #555; border-left: 0; border-radius: 2px; background: #0c0c0c; box-shadow: inset 5px 0 #c9a13f; }
.chain-in { display: flex; padding: 11px 0 8px 9px; height: 201px; overflow: hidden; }
.vert { writing-mode: vertical-rl; transform: rotate(180deg); text-align: center; font-size: 10px; font-weight: 700; color: #e2e2e2; white-space: nowrap; }
.track-name { width: 14px; }
.add { width: 21px; margin-right: 1px; color: #999; }
.add svg, .between > svg, .plus svg { width: 12px; height: 12px; }
.device { display: flex; gap: 2px; padding: 2px; background: #545454; border-radius: 5px; flex: none; }
.side { width: 22px; flex: none; display: flex; flex-direction: column; align-items: center; gap: 6px; color: #a0a0a0; background: #444; margin: -2px 0 -2px -2px; padding: 5px 0; border-radius: 5px 0 0 5px; }
.side h3 { flex: 1; }
.side svg { width: 11px; height: 11px; }
.side .flat, .m { width: 15px; height: 8px; }
.side .flat { width: 11px; }
.mods { display: grid; grid-template-columns: 58px 58px 25px; grid-template-rows: repeat(3, 1fr); gap: 2px; }
.cell { position: relative; background: #2f2f2f; border-radius: 3px; display: flex; flex-direction: column; align-items: center; justify-content: flex-end; padding-bottom: 3px; min-height: 0; }
.cell.plus { background: #404040; justify-content: center; color: #999; padding: 0; }
.cell .draw { width: 58px; height: 42px; }
.cell .tr { position: absolute; right: 4px; top: 2px; color: #ccc; font-size: 9px; }
.cell .keys { position: absolute; top: 3px; color: #eee; }
.cell .keys svg { width: 24px; height: 12px; }
.cell.labels { justify-content: flex-start; padding-top: 1px; }
.cell strong { font-weight: 400; color: #ccc; line-height: 14px; }
.pair { display: flex; width: 100%; justify-content: space-around; font-weight: 700; font-size: 8px; line-height: 10px; padding: 1px 2px 0; }
.pair span { display: flex; flex-direction: column; align-items: center; }
.synth { display: grid; grid-template-columns: 118px 57px 178px 151px; grid-template-rows: 118px 1fr; gap: 3px; }
.pane { position: relative; background: #2f2f2f; border-radius: 3px; display: flex; min-width: 0; }
.wavetable { grid-column: 1 / 3; flex-direction: column; background: #1e1e1e; }
.xp { grid-column: 3; grid-row: 1; }
.adsr { grid-column: 4; grid-row: 1; flex-direction: column; }
.sub { grid-column: 1; grid-row: 2; }
.noise { grid-column: 2; grid-row: 2; justify-content: center; }
.feg { grid-column: 3; grid-row: 2; }
.glide { grid-column: 4; grid-row: 2; }
.ptitle { height: 18px; display: flex; align-items: center; justify-content: center; gap: 10px; padding-left: 20px; font-weight: 700; font-size: 9px; position: relative; }
.ptitle .bars { position: absolute; right: 3px; width: 12px; height: 9px; color: #555; }
.ptitle .pw { position: absolute; left: 10px; width: 10px; height: 10px; }
.ptitle .m { position: absolute; right: 8px; }
.wt-body { flex: 1; display: grid; grid-template-columns: 46px 1fr 60px; min-height: 0; padding-top: 3px; }
.col { display: flex; flex-direction: column; align-items: center; }
.col .ic { width: 11px; height: 11px; }
.left { padding: 4px 0 0 10px; }
.left .knob { margin-top: 12px; }
.col .table { width: 74px; height: 60px; }
.col small { font-size: 9px; font-weight: 700; line-height: 12px; }
.col .minis { width: 40px; height: 12px; }
.right { padding-right: 4px; }
.right .knob { margin: 7px 0 2px; }
.right .knob + span { color: #ccc; line-height: 10px; }
.wt-foot { height: 22px; display: flex; align-items: center; padding: 0 6px 0 20px; justify-content: space-between; color: #dd873c; }
.wt-foot svg { width: 18px; height: 10px; }
.wt-foot i { color: #777; }
.sync { position: absolute; left: 12px; bottom: -6px; height: 9px; padding: 0 2px; font: 700 6px/9px Lato, sans-serif; background: #777; color: #222; border-radius: 2px; z-index: 1; }
.knob { display: block; flex: none; }
.kcol { display: flex; flex-direction: column; align-items: center; justify-content: flex-end; line-height: 12px; color: #ccc; padding-bottom: 3px; }
.sub .kcol { width: 58px; }
.shapes { padding: 10px 0 0; flex: 1; }
.shapes > svg { width: 50px; height: 24px; margin-left: -5px; }
.octs { display: flex; gap: 10px; margin-left: -8px; line-height: 16px; }
.octs b { font-weight: 400; color: #b277e4; border-bottom: 1px solid #b277e4; padding: 0 5px; margin-right: -4px; }
.xp .ptitle { position: absolute; left: 0; right: 0; padding-left: 30px; gap: 26px; }
.xp-left { display: grid; grid-template-columns: 22px 24px; gap: 5px 4px; padding: 18px 0 0 5px; align-content: start; align-items: center; justify-items: center; color: #aaa; }
.xp-left > svg { width: 10px; height: 12px; }
.xp-left > .env { width: 13px; }
.xp-left > .or { width: 18px; }
.knob > svg { width: 100%; height: 100%; }
.xp-main { flex: 1; padding: 34px 4px 0 8px; display: flex; flex-direction: column; }
.big { display: flex; align-items: center; gap: 12px; height: 50px; }
.biglab { display: flex; justify-content: space-between; padding: 0 27px 0 8px; line-height: 10px; color: #ccc; }
.biglab svg { width: 10px; height: 8px; }
.pick { display: flex; align-items: center; margin-top: 3px; margin-left: 4px; height: 17px; padding: 0 3px 0 4px; background: #555; border-radius: 3px; color: #eee; font-weight: 700; font-size: 9px; }
select { appearance: none; flex: 1; outline: 0; min-width: 0; }
.feg { justify-content: space-around; }
.feglab { display: flex; flex-direction: column; align-items: center; gap: 3px; padding-top: 14px; width: 34px; font-size: 9px; line-height: 10px; }
.feglab .gray { width: 14px; height: 8px; margin-top: 8px; }
.adsr-graph { width: 128px; height: 46px; margin-left: 8px; }
.four { display: flex; justify-content: space-between; padding: 10px 10px 0; }
.glide { justify-content: space-around; padding: 0 8px; }
.glide .kcol { width: 42px; }
.curve { width: 12px; height: 12px; }
.glide .kcol span { white-space: nowrap; }
.glide b { font-size: 7px; background: #aaa; color: #222; border-radius: 2px; padding: 0 2px; }
.linked { position: relative; }
.linked::before { content: ""; position: absolute; left: -8px; top: 28px; width: 14px; height: 2px; background: #555; }
.outs { width: 65px; display: flex; flex-direction: column; gap: 2px; }
.slot { height: 25px; background: #2f2f2f; border-radius: 3px; border-top: 2px solid #3f5f70; color: #ddd; font-weight: 700; font-size: 9px; }
.out { flex: 1; background: #424242; border-radius: 3px; display: flex; flex-direction: column; align-items: center; padding-top: 8px; color: #aaa; }
.two { display: grid; grid-template-columns: 24px 24px; gap: 2px 4px; justify-items: center; margin-bottom: 4px; }
.two > svg { width: 9px; height: 9px; }
.pan { width: 11px; height: 6px; margin-bottom: 6px; }
.between { width: 17px; position: relative; display: flex; align-items: center; justify-content: center; color: #999; flex: none; }
.mm { position: absolute; bottom: 5px; display: flex; gap: 1px; align-items: flex-end; }
.mm i { width: 4px; height: 15px; background: #74b53e; border-top: 1px solid #d8d850; }
.mm i + i { height: 18px; }

/* equalizer */
.eq { flex: 1 1 379px; min-width: 0; }
.eq .side, .grid-dev .side { width: 24px; }
.eq-main { flex: 1; min-width: 0; background: #1e1e1e; border-radius: 3px; display: flex; flex-direction: column; }
.eq-top { height: 22px; display: flex; align-items: center; padding: 0 6px; color: #ccc; white-space: nowrap; }
.eq-top b { font-weight: 400; color: #dd873c; margin: 0 34px 0 11px; }
.eq-top .act { margin: 0 5px; padding: 0 2px; border-bottom: 1px solid #dd873c; }
.eq-top .r { margin-right: 6px; }
.eq-top svg { width: 10px; height: 9px; margin-left: auto; color: #888; }
.eq-top .ud { margin-left: 2px; }
.eq-graph { width: 100%; height: 138px; }
.eq-graph text { font: 9px Lato, sans-serif; fill: #777; }
.eq-graph .num { fill: #111; font-weight: 700; text-anchor: middle; }
.eq-bot { flex: 1; display: flex; align-items: center; padding: 0 18px 0 7px; gap: 3px; color: #ddd; }
.eq-bot .spk { width: 8px; height: 8px; color: #888; margin-left: 2px; }
.eq-bot .pw { width: 10px; height: 10px; margin-left: 8px; }
.type { display: flex; align-items: center; margin-left: 4px; width: 78px; }
.type > svg:first-child { width: 12px; height: 8px; }
.eq-bot .v { margin-left: auto; }
.grid-dev { flex: 0 0 64px; overflow: hidden; border-radius: 5px 0 0 5px; }
.fx { flex: none; width: 80px; display: flex; flex-direction: column; gap: 2px; }
.fx-title { height: 19px; display: flex; align-items: center; gap: 4px; padding-left: 5px; background: #1e1e1e; color: #ddd; border-radius: 3px 0 0 0; }
.fx-title svg { width: 11px; height: 9px; }
.fx-main { flex: 1; background: #3a3a3a; padding-top: 3px; color: #ddd; }
.fx-main .m { margin-left: 15px; }
.fx-main .knob { margin: 7px 0 0 2px; }
.under { display: block; padding-left: 2px; line-height: 18px; border-bottom: 3px solid #d8404f; }
.fx-main button { width: 50px; height: 19px; margin: 31px 0 8px 3px; background: #666; border-radius: 3px; justify-content: flex-start; padding-left: 4px; gap: 14px; }
.mintline { border-color: #6fc99b; }
.chain-scroll { height: 3px; padding-left: 27px; }
.chain-scroll span { display: block; height: 3px; width: 75%; background: #666; }

/* status bar */
.status { flex: 1; min-height: 28px; display: flex; align-items: center; padding: 0 10px 0 14px; gap: 13px; color: #cfcfcf; background: #303030; }
.status a { font-weight: 700; font-size: 9px; white-space: nowrap; }
.status .sel { color: #e38b3d; }
.status hr { width: 1px; height: 16px; border: 0; background: #888; margin: 0; }
.status svg { width: 13px; height: 13px; }
.info { font: 700 10px "DejaVu Sans Mono", monospace; }
.grow { flex: 1; }

/* floating round buttons */
.fab { position: absolute; top: 8px; width: 102px; height: 102px; border-radius: 50%; background: #0000005c; }
.fab svg { width: 102px; height: 102px; }
.close { left: 24px; }
.lens { right: 150px; }
.more { right: 24px; }
```
FILE: app.js
```js
const $ = (id) => document.getElementById(id);
const icon = (n, cls = '') => `<svg class="${cls}"><use href="#${n}"/></svg>`;

document.querySelectorAll('[data-icon]').forEach((b) => { b.innerHTML = icon(b.dataset.icon); });

function rng(seed) {
  let s = seed * 7919 + 17;
  return () => { s = (s * 1103515245 + 12345) & 0x7fffffff; return s / 0x7fffffff; };
}

/* amplitude of a waveform at position t (0..1), x in pixels */
const shapes = {
  decay: (t, x, r) => Math.max(0.03, 1 - t * 1.1) * (0.92 + r() * 0.08),
  swell: (t, x, r) => Math.max(0.03, (t < 0.15 ? 0.55 + t * 3 : 1.15 - t * 1.4)) * (0.85 + r() * 0.15),
  vocal: (t, x, r) => Math.max(0.04, t < 0.06 ? 0.4 * Math.sin(t * 52) : t < 0.6 ? 0.55 + 0.45 * Math.sin(t * 11) ** 2 : 0.9 - (t - 0.6) * 3.2) * (0.7 + r() * 0.3),
  noise: (t, x, r) => 0.45 + r() * 0.55,
  tail: (t, x, r) => (x % 9 < 2 ? 0.6 : 0.15) + r() * 0.35,
  hits: (t, x, r) => { const u = (x % 34) / 34; return Math.max(0.06, (u < 0.12 ? 0.08 : u < 0.42 ? 1.1 - u : u < 0.6 ? 0.75 - u : u < 0.68 ? 0.95 : 1.05 - u)) * (0.5 + r() * 0.5); },
  loop: (t, x, r) => { const u = (x % 34) / 34; return Math.max(0.14, (u < 0.15 ? 1.1 - u * 4 : u < 0.4 ? 0.3 : u < 0.5 ? 1 : u < 0.7 ? 0.35 : u < 0.9 ? 0.8 : 0.4)) * (0.35 + r() * 0.65); },
  beats: (t, x, r) => { const u = (x % 17) / 17; const k = Math.floor(x / 17) % 2 === 0 ? 0.6 : 1; return Math.max(0.07, u > 0.5 && u < 0.65 ? 0.3 : k * (1 - u * 2.2)) * (0.5 + r() * 0.5); },
  sparse: (t, x, r) => { const u = (x % 135) / 135; return Math.max(0.1, u < 0.1 ? 1 - u * 8 : 0.4 * Math.sin(x / 7)) * (0.6 + r() * 0.4); },
};

function art(kind, w, h, seed) {
  const r = rng(seed);
  let d = '';
  if (shapes[kind]) {
    const top = [], bot = [];
    for (let x = 0; x <= w; x += 1) {
      const a = shapes[kind](x / w, x, r) * h * 0.47;
      top.push(`${x} ${(h / 2 - a).toFixed(1)}`);
      bot.unshift(`${x} ${(h / 2 + a * 0.9 + 0.5).toFixed(1)}`);
    }
    d = `M${top.join('L')}L${bot.join('L')}z`;
  } else if (kind === 'drums') {
    for (let x = 0; x < w; x += 68) d += `M${x + 8} 5h4v1.5h-4zM${x + 12} 4h4v1.500h-4zM${x + 21} 4h7v1.500h-7zM${x + 28} 5h5v1.500h-5zM${x + 43} 4h4v3h-4zM${x} 15h4v2h-4zM${x + 17} 15h4v2h-4zM${x + 29} 15h7v2h-7zM${x + 50} 15h4v2h-4z`;
  } else if (kind === 'drumsfull') {
    for (let x = 0; x < w; x += 68) d += `M${x + 8} 4h4v1.500h-4zM${x + 12} 3h4v1.500h-4zM${x + 21} 3h10v1.500h-10zM${x + 43} 3h4v3h-4z`;
    for (let x = 0; x < w; x += 8.5) d += `M${x} 14.500h7v2h-7z`;
    for (let x = 3; x < w; x += 17) d += `M${x} ${9 + (r() * 3 | 0)}h4v1.500h-4z`;
  } else if (kind === 'chords') {
    for (let x = 0; x < w; x += 135) {
      for (let i = 0; i < 5; i++) d += `M${x} ${2 + i * 3.2}h45v2.4h-45zM${x + 59} ${1 + i * 3.2}h42v2.400h-42z`;
      for (let i = 0; i < 3; i++) d += `M${x + 50} ${3 + i * 4}h8v1.600h-8z`;
    }
  } else if (kind === 'chord') {
    for (let i = 0; i < 6; i++) d += `M0 ${2 + i * 2.6}h${seed % 2 ? 34 : 50}v1.200H0zM${seed % 2 ? 36 : 54} ${3 + i * 2.6}h${seed % 2 ? 36 : 12}v1h-${seed % 2 ? 36 : 12}z`;
  } else if (kind === 'blocks') {
    for (let x = 0; x < w; x += 9) for (let i = 0; i < 6; i++) if (r() > 0.2) d += `M${x} ${2 + i * 2.6}h6v1.400h-6z`;
  } else if (kind === 'lines') {
    d = 'M0 12h18v1h-18zM18 6h17v1h-17zM36 9h36v1h-36z';
  } else if (kind === 'long') {
    d = 'M0 13h38v1h-38zM41 13h25v1h-25zM67 5h39v1h-39zM109 5h22v1h-22zM135 9h84v1h-84z';
  } else if (kind === 'notes') {
    let x = 0;
    const ys = [9, 12, 10, 5, 12, 13, 9, 2, 15, 9];
    for (let i = 0; x < w; i++) {
      const len = i % 9 === 5 ? 11 : 4;
      d += `M${x} ${ys[i % 10] + (seed % 3)}h${len}v1.300h-${len}z`;
      x += len + 5 + (i * 7 % 5);
    }
  } else {
    const n = Math.round(w / 6);
    const ys = [14, 9, 15, 12, 7, 14, 3, 15, 10, 13, 15, 5];
    for (let i = 0; i < n; i++) d += `M${(i * 6 + r() * 4).toFixed(1)} ${ys[(i * 5 + seed) % 12]}h1.500v1.200h-1.500z`;
  }
  return `<svg class="art ${kind === 'chords' ? 'soft' : ''}" viewBox="0 0 ${w} ${h}" preserveAspectRatio="none"><path d="${d}"/></svg>`;
}

const clip = (name, c, kind, opt = {}) => ({ name, c, kind, ...opt });
const T = '#3f8c7e', R = '#b7372c', O = '#d65c28', Y = '#b68e33', G = '#647d27', E = '#5aa561', V = '#65b9a6';
const tracks = [
  { name: 'Drum Machine', c: '#45a898', icon: 'drum', rec: 1, vol: 54, m: [64, 64], hot: 1,
    cells: [clip('808 (Bass-...', T, 'drums'), clip('808 (Bass-...', '#64b9a4', 'noise'), clip('808 (Bass-...', T, 'drumsfull'), clip('808 (B', T, 'drums')] },
  { name: 'Berlin Firework Kit', c: '#62b9ee', icon: 'drum', rec: 1, vol: 54, m: [30, 24], lit: 1,
    cells: ['s', clip('Berlin Fire...', '#63b1e3', 'dots', { playing: 1 }), clip('Berlin Fire...', '#63b1e3', 'tail'), 's'] },
  { name: 'Group 3', c: '#c9447a', icon: 'openfolder', rec: 0, vol: 78, m: [66, 66], hot: 1, lit: 1, group: 1,
    cells: [{ scene: 'Scene 1', mix: '#dd6b35 0 50%, #7f9c38 50%' }, { scene: 'Scene 2', mix: '#bb3f35 0 33%, #dd6b35 33% 66%, #7f9c38 66%' }, { scene: 'Scene 3', mix: '#bb3f35 0 25%, #dd6b35 25% 50%, #c99f3d 50% 75%, #7f9c38 75%' }, { scene: 'Scen', mix: '#bb3f35 0 50%, #7f9c38 50%' }] },
  { name: 'Audio 1', c: '#c73a30', icon: 'wave', rec: 0, vol: 54, m: [66, 66], nest: 1, cls: 'tall',
    cells: ['s', clip('TrashLoop1', R, 'hits'), clip('TrashLoop2b', R, 'loop'), clip('Trash', '#c6625a', 'loop')] },
  { name: 'Audio 2', c: '#e2602a', icon: 'wave', rec: 0, vol: 54, m: [0, 0], nest: 1,
    cells: [clip('deceleratefall', O, 'decay'), clip('dorianredu...', O, 'decay'), clip('dwindle', O, 'swell'), clip('fallon', O, 'swell')] },
  { name: 'Acoustic Jam', c: '#cc9c3b', icon: 'piano', rec: 2, vol: 54, m: [28, 32], nest: 1, cls: 'xtall',
    cells: ['r', 'r', clip('Vita 03 Lead', Y, 'notes', { padded: 1 }), clip('Vita 0', Y, 'dots', { padded: 1 })] },
  { name: 'Polymer', c: '#77923a', icon: 'piano', rec: 1, vol: 54, m: [54, 54], nest: 1,
    cells: [clip('Mella 01 C...', G, 'chord'), clip('Mella 02 C...', G, 'chord'), clip('Mella 03 C...', G, 'blocks'), clip('Mella', G, 'blocks')] },
  { name: 'Drum Machine', c: '#57ad62', icon: 'piano', rec: 1, vol: 54, m: [0, 0], lit: 1,
    cells: [clip('Soulful Cho...', E, 'lines'), clip('Soulful Cho...', E, 'notes'), clip('Soulful Cho...', E, 'notes', { playing: 1 }), clip('Soulf', E, 'lines')] },
  { name: 'Audio 5', c: '#66cbb6', icon: 'wave', rec: 0, vol: 54, m: [50, 44],
    cells: [clip('Vocal A', V, 'vocal', { st: 1 }), clip('Vocal B', V, 'vocal', { st: 1 }), clip('Vocal C', V, 'vocal', { st: 1 }), clip('Vocal', '#7cdbc7', 'noise')] },
  { name: 'Audio 6', c: '#777', icon: 'wave', rec: 0, vol: 54, m: [34, 28],
    cells: [clip('NeverEngin...', '#5e5e5e', 'noise'), clip('NeverEngin...', '#5e5e5e', 'noise'), clip('Wavoloid1...', '#5e5e5e', 'sparse'), clip('Wavo', '#5e5e5e', 'sparse')] },
];

const recClass = ['off', '', 'hot'];
let heads = '', stops = '', cells = '', lists = '';
tracks.forEach((t, i) => {
  const meter = `<span class="meter">${t.m.map((h) => (h ? `<i class="${t.hot ? 'hot-m' : ''}" style="--h:${h}%"></i>` : '')).join('')}</span>`;
  const sel = t.cls === 'xtall';
  const strips = t.nest ? '<span class="strip nest"></span>' : '';
  heads += `<div class="row ${t.cls || ''}">${strips}<span class="strip ${t.group ? 'first-nest' : ''}" style="--c:${t.c}"></span><div class="head-body"><div class="track"><div class="ctl">
    <div><span class="nm">${t.name}</span><button class="${recClass[t.rec]}" aria-label="Arm ${t.name}">${icon('rec')}</button><button>S</button><button>M</button></div>
    <div>${icon(t.icon, 'ti')}<input type="range" aria-label="${t.name} volume" min="0" max="100" value="${t.vol}" style="--v:${t.vol}%"><button class="${sel ? 'menu-on' : ''}" aria-label="${t.name} lanes">${icon('menu')}</button></div>
    </div>${meter}</div>${sel ? `<div class="auto-panel"><button class="lane-pick"><span>Polymer » Wavetable<br>Index</span>${icon('caret')}${icon('pin', 'pin')}</button><div class="auto-btns">${icon('star')}${icon('plus')}${icon('cross')}</div></div>` : ''}</div></div>`;
  stops += `<div class="row ${t.cls || ''}"><i class="sq"></i></div>`;
  lists += `<div class="row ${t.cls || ''} ${t.lit ? 'lit' : ''}">${icon('list')}</div>`;
  cells += `<div class="row ${t.cls || ''}">` + t.cells.map((c, j) => {
    if (c === 's') return `<div class="slotcell">${icon('stop')}</div>`;
    if (c === 'r') return `<div class="slotcell r">${icon('rec')}</div>`;
    if (c.scene) return `<div class="scene">${icon('play')}${c.scene}<i class="mix" style="background:linear-gradient(${c.mix})"></i></div>`;
    return `<div class="clip ${c.padded ? 'padded' : ''}" style="--c:${c.c}"><div class="clip-top">${icon('play', c.playing ? 'playing' : '')}<span>${c.name}</span>${c.st ? icon('steps', 'st') : ''}</div>${art(c.kind, 72, t.cls === 'tall' ? 34 : 18, i * 5 + j + 1)}</div>`;
  }).join('') + '</div>';
});
$('heads').innerHTML = heads + '<div class="row"><span class="strip" style="--c:#b58b35"></span></div>';
$('stops').innerHTML = stops;
$('cells').innerHTML = cells;
$('lists').innerHTML = lists;
$('scenes').innerHTML = ['Intro', 'Alt. 1', 'Alt. 2', 'Main'].map((s) => `<div class="scene">${icon('play')}${s}</div>`).join('');

/* timeline: positions are given in bars */
const SPAN = 780, BAR = 67.45, LEAD = 20.5;
const px = (bar) => LEAD + BAR * (bar - 1);
const pos = (bar) => (px(bar) / SPAN * 100).toFixed(3) + '%';
const box = (a, b) => `left:${pos(a)};width:${((px(b) - px(a)) / SPAN * 100).toFixed(3)}%`;
let ruler = '';
for (let b = 1; b <= 12; b++) ruler += `<span style="left:${pos(b)}">${b}</span>`;
$('ruler').innerHTML = ruler + `<i class="loop" style="${box(1, 10)}"></i><svg class="mark" style="left:${pos(4)}" viewBox="0 0 8 8" preserveAspectRatio="none"><path d="M0 0v8l8-4z"/></svg>`;

let lines = '';
for (let q = -1; q < 48; q++) lines += `<path d="M${px(1 + q / 4)} 0v10" stroke="#000" stroke-opacity="${q % 4 ? 0.05 : 0.12}"/>`;
const grid = `<svg class="grid" viewBox="0 0 780 10" preserveAspectRatio="none"><path d="M0 0h20.500v10H0zM627.500 0H780v10H627.500z" fill="#000" fill-opacity=".05"/>${lines}</svg>`;

const END = 12.265;
const laneClips = {
  0: [[5, 8, '808 (Bass-08) - House Force (intro)', '#52a598', 'drums'], [8, 9, '808 (Bass-08)', '#6cb5a5', 'tail'], [9, END, '808 (Bass-08) - House Force (full)', '#52a598', 'drumsfull']],
  1: [[1.25, 6.25, 'Berlin Firework Beat 01', '#7496aa', 'dots', 'mute'], [7, END, 'Berlin Firework Beat 02-bounce-1', '#7496aa', 'beats', 'mute']],
  3: [[3, 6.27, 'TrashLoop1', '#c46f67', 'hits'], [6.27, 11, 'TrashLoop2b', '#c0574d', 'loop']],
  4: [[1, 3.5, 'dwindle', '#cd6f3e', 'swell'], [5, 8.48, 'deceleratefall', '#cd6f3e', 'decay']],
  5: [[3, 11, 'Vita 04 Lead', '#b69445', 'notes']],
  6: [[1, END, 'Mella 03 Chords', '#829643', 'chords']],
  7: [[9, END, 'Soulful Chords 01 A', '#76977b', 'long', 'mute']],
  8: [[2, 6, 'Vocal A', '#70b3a5', 'vocal', 'st'], [7, 11, 'Vocal D', '#70b3a5', 'vocal', 'st sel']],
  9: [[2, 10, 'Wavoloid1955 Acccolours', '#7f7f7f', 'sparse']],
};
const marks = { 0: [6], 1: [5.25], 3: [5], 6: [9] };
const groupBars = [[3, 6.27, 0, '#9d5550'], [6.27, 11, 0, '#8f3b35'], [1, 3.5, 1, '#a7532b'], [5, 8.48, 1, '#a7532b'], [3, 11, 2, '#947936'], [1, END, 3, '#65752f']];
const points = [[138, 48], [290, 4], [357, 48], [374, 4], [425, 48], [560, 4]];
let lanes = '';
tracks.forEach((t, i) => {
  let inner = grid;
  if (i === 2) {
    inner += `<div class="gback" style="left:${pos(1)}"></div>` + groupBars.map(([a, b, n, c]) => `<i class="gbar" style="${box(a, b)};top:${1 + n * 9}px;--c:${c}"></i>`).join('');
  } else {
    inner += (laneClips[i] || []).map(([a, b, name, c, kind, cls = ''], j) => `<div class="tclip ${cls.replace('st', '')}" style="${box(a, b)};--c:${c}"><b>${name}</b>${cls.startsWith('st') ? icon('steps', 'st') : ''}${art(kind, Math.round(px(b) - px(a)), t.cls === 'tall' ? 34 : 18, i * 9 + j + 3)}</div>`).join('');
    inner += (marks[i] || []).map((m) => `<i class="loopline" style="left:${pos(m)}"></i>`).join('');
  }
  if (i === 5) {
    const curve = 'M0 48H138C185 20 225 4 290 4C310 30 330 47 357 48C370 46 366 4 374 4C405 0 405 35 425 48C500 48 530 45 560 4H650C700 4 740 8 780 15';
    let ghosts = '';
    for (let k = 0; k < 46; k++) ghosts += `<path d="M${156 + k * 11.7} ${[15, 35, 28, 42, 20, 35, 28][k % 7]}h${k % 12 === 9 ? 12 : 5}" stroke="#7b6a45" stroke-opacity=".5"/>`;
    inner += `<div class="autolane">${grid}<svg viewBox="0 0 780 52" preserveAspectRatio="none"><path d="${curve}V52H0z" fill="#5f7f9e" fill-opacity=".65"/>${ghosts}<path d="${curve}" fill="none" stroke="#2f6390" stroke-width="1.600"/>${points.map(([x, y]) => `<circle cx="${x}" cy="${y}" r="2.800" fill="#8ccaf5" stroke="#2f6390"/>`).join('')}</svg></div>`;
  }
  lanes += `<div class="row lane ${t.cls || ''} ${i > 2 && i < 6 ? 'shade' : ''}">${inner}</div>`;
});
$('lanes').innerHTML = lanes + `<div class="row lane"></div><i class="playhead" style="left:${pos(8.59)}"></i>`;

/* knobs */
const arc = (c, r, a, b) => {
  const p = (g) => { const k = (g - 90) * Math.PI / 180; return `${(c + r * Math.cos(k)).toFixed(2)} ${(c + r * Math.sin(k)).toFixed(2)}`; };
  return `M${p(a)}A${r} ${r} 0 ${b - a > 180 ? 1 : 0} 1 ${p(b)}`;
};
document.querySelectorAll('.knob').forEach((k) => {
  const d = k.dataset, s = +d.size, c = s / 2, r = c - 1, br = c * (d.light ? 0.76 : 0.68);
  k.style.width = k.style.height = s + 'px';
  const ring = d.color ? `<path d="${arc(c, r, +d.from, +d.to)}" stroke="${d.color}"/>` : '';
  const ring2 = d.color2 ? `<path d="${arc(c, r, +d.to, +d.to2)}" stroke="${d.color2}"/>` : '';
  k.innerHTML = `<svg viewBox="0 0 ${s} ${s}" overflow="visible"><defs><linearGradient id="kl" x2="0" y2="1"><stop stop-color="#f2f2f2"/><stop offset="1" stop-color="#bbb"/></linearGradient><linearGradient id="kd" x2="0" y2="1"><stop stop-color="#757575"/><stop offset="1" stop-color="#4d4d4d"/></linearGradient></defs>
    <g fill="none" stroke-width="1.600"><path d="${arc(c, r, -140, 140)}" stroke="#555"/>${ring}${ring2}</g>${d.color2 ? '<circle cx="33" cy="4" r="2.800" fill="#2d6ea8" stroke="#62b8e8" stroke-width="1.300"/>' : ''}<circle cx="${c}" cy="${c}" r="${br}" fill="url(#${d.light ? 'kl' : 'kd'})"/>
    <path d="M${c} ${c - br * 0.25}V${c - br * 0.9}" transform="rotate(${d.angle} ${c} ${c})" stroke="${d.light ? '#111' : '#f4f4f4'}" stroke-width="2"/></svg>`;
});

/* stacked wavetable frames */
let wt = '';
for (let i = 0; i < 26; i++) {
  const ox = i * 0.5, oy = 7 - i * 0.5;
  const pts = [[1, 38], [6, 26], [10, 29], [15, 28], [22, 7], [27, 12], [30, 32], [34, 24], [38, 36], [44, 20], [48, 12], [52, 34], [56, 38], [59, 20]].map(([x, y], n) => `${x + ox} ${(y + oy + Math.sin(i / 4 + n) * 4).toFixed(1)}`);
  wt += `<path d="M${pts.join('L')}" fill="none" stroke="#d9c24c" stroke-opacity="${i % 6 ? 0.4 : 0.95}" stroke-linejoin="round"/>`;
}
$('wavetable').innerHTML = wt;

/* equalizer curve */
const freqs = [13, 40, 60, 74, 81, 85, 120, 142, 158, 169, 179, 187, 194, 199, 234, 254, 268, 280, 290, 298, 305, 312];
const spec = '46 138 60 127 76 117 86 116 91 103 96 94 105 68 112 60 120 60 124 68 128 79 134 72 140 75 145 60 150 54 155 62 160 90 164 92 170 68 175 60 180 69 185 58 190 64 198 78 201 89 205 56 209 54 213 57 217 85 225 70 232 61 235 91 240 80 245 83 248 78 252 96 258 76 262 85 266 80 270 91 274 83 279 86 284 102 287 92 290 105 296 99 305 98 312 108 320 100 326 116 332 111 338 126 342 120 351 137';
const nums = [[76, 89, '1'], [158, 85, '2'], [310, 29, '3'], [235, 41, '4'], [213, 109, '5'], [310, 16, '↔']];
$('eq').innerHTML = `<defs><linearGradient id="eqg" gradientUnits="userSpaceOnUse" x1="41" x2="351" y1="0" y2="0"><stop stop-color="#a8322c"/><stop offset=".14" stop-color="#d8493a"/><stop offset=".27" stop-color="#e0913f"/><stop offset=".35" stop-color="#ecdc56"/><stop offset=".42" stop-color="#9fe04e"/><stop offset=".55" stop-color="#59d959"/><stop offset=".63" stop-color="#6ee8c8"/><stop offset=".72" stop-color="#7fb6e4"/><stop offset=".82" stop-color="#b3b0e6"/><stop offset=".9" stop-color="#cfcfcf"/></linearGradient></defs>
  ${freqs.map((x) => `<path d="M${x} 0v138" stroke="#2a2a2a"/>`).join('')}<path d="M0 4h352M0 133h352" stroke="#333"/><path d="M85.500 0v138M199.500 0v138" stroke="#3a3a3a"/>
  <path d="M${spec}V138H46z" fill="#333" fill-opacity=".8"/><path d="M${spec}" fill="none" stroke="#808080"/>
  <path d="M0 69H240C285 69 290 62 310 48C325 36 335 32 352 30" fill="none" stroke="#bbb"/>
  <path d="M41 138L66 65Q76 40 86 45C103 56 113 62 128 64C148 70 150 76 158 82C166 72 170 66 180 64C192 60 204 54 208 62C211 72 211 84 213 90C216 80 216 42 239 41C252 43 263 56 283 57C300 57 315 32 352 30" fill="none" stroke="url(#eqg)" stroke-width="2.300"/>
  <path d="M310.500 0v138" stroke="#eee" stroke-width="1.300"/>
  ${nums.map(([x, y, n]) => `<circle cx="${x}" cy="${y}" r="5.200" fill="#fff"/><text class="num" x="${x}" y="${y + 3}">${n}</text>`).join('')}
  <text x="9" y="16">20</text><text x="88" y="16">100</text><text x="202" y="16">1k</text><text x="316" y="16">10k</text><text x="331" y="9">+10</text><text x="335" y="136">-10</text>`;
```
